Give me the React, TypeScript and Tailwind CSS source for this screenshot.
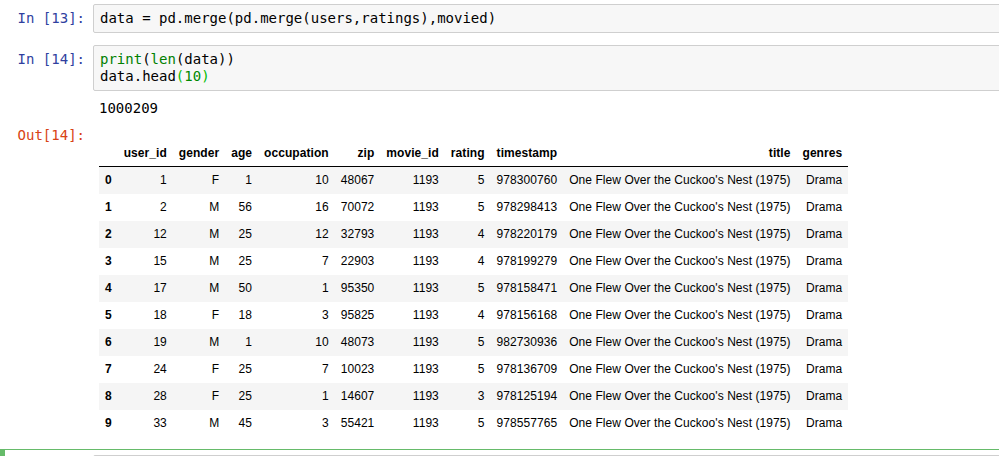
import React from 'react'

const mono = { fontFamily: '"DejaVu Sans Mono", "Liberation Mono", monospace' }

const headers = ['', 'user_id', 'gender', 'age', 'occupation', 'zip', 'movie_id', 'rating', 'timestamp', 'title', 'genres']

const rows: (string | number)[][] = [
  [0, 1, 'F', 1, 10, '48067', 1193, 5, 978300760],
  [1, 2, 'M', 56, 16, '70072', 1193, 5, 978298413],
  [2, 12, 'M', 25, 12, '32793', 1193, 4, 978220179],
  [3, 15, 'M', 25, 7, '22903', 1193, 4, 978199279],
  [4, 17, 'M', 50, 1, '95350', 1193, 5, 978158471],
  [5, 18, 'F', 18, 3, '95825', 1193, 4, 978156168],
  [6, 19, 'M', 1, 10, '48073', 1193, 5, 982730936],
  [7, 24, 'F', 25, 7, '10023', 1193, 5, 978136709],
  [8, 28, 'F', 25, 1, '14607', 1193, 3, 978125194],
  [9, 33, 'M', 45, 3, '55421', 1193, 5, 978557765],
]

function Prompt({ children, out }: { children: React.ReactNode; out?: boolean }) {
  return (
    <div
      style={mono}
      className={`w-[93px] shrink-0 pr-[8px] text-right text-[14px] leading-[17px] ${out ? 'text-[#D84315]' : 'text-[#303F9F]'}`}
    >
      {children}
    </div>
  )
}

function InputBox({ children }: { children: React.ReactNode }) {
  return (
    <div
      style={mono}
      className="flex-1 -mr-[4px] rounded-l-[2px] border border-[#cfcfcf] bg-[#f7f7f7] py-[5px] pl-[6px] text-[14px] leading-[17px] text-black whitespace-pre"
    >
      {children}
    </div>
  )
}

export default function App() {
  return (
    <div className="w-[999px] h-[456px] overflow-hidden bg-white flex flex-col" style={{ fontFamily: '"Liberation Sans", Arial, sans-serif' }}>
      {/* cell 13 */}
      <div className="flex pt-[4px]">
        <div className="pt-[6px] flex"><Prompt>In [13]:</Prompt></div>
        <InputBox>data = pd.merge(pd.merge(users,ratings),movied)</InputBox>
      </div>

      {/* cell 14 */}
      <div className="flex mt-[12px]">
        <div className="pt-[6px] flex"><Prompt>In [14]:</Prompt></div>
        <InputBox>
          <span className="text-[#008000]">print</span>(<span className="text-[#008000]">len</span>(data)){'\n'}
          data.head<span className="text-[#0b0]">(</span><span className="text-[#080]">10</span><span className="text-[#0b0]">)</span>
        </InputBox>
      </div>

      {/* stdout */}
      <div className="flex mt-[9px]">
        <div className="w-[99px] shrink-0" />
        <div style={mono} className="text-[14px] leading-[17px] text-black">1000209</div>
      </div>

      {/* Out[14] */}
      <div className="flex mt-[10px] pb-[12px]">
        <div className="w-[93px] shrink-0 flex">
          <Prompt out>Out[14]:</Prompt>
        </div>
        <div className="pl-[6px]">
          <table className="mt-[13px] border-collapse text-[12px] tracking-[0.06px] text-black">
            <thead>
              <tr className="border-b border-black">
                {headers.map((h, i) => (
                  <th key={i} className="px-[6px] py-[6px] leading-[14px] font-bold text-right whitespace-nowrap">{h}</th>
                ))}
              </tr>
            </thead>
            <tbody>
              {rows.map((r, i) => (
                <tr key={i} className={i % 2 === 0 ? 'bg-[#f5f5f5]' : 'bg-white'}>
                  <th className="px-[6px] py-[6px] leading-[15px] font-bold text-left">{r[0]}</th>
                  {r.slice(1).map((c, j) => (
                    <td key={j} className="px-[6px] py-[6px] leading-[15px] text-right whitespace-nowrap">{c}</td>
                  ))}
                  <td className="px-[6px] py-[6px] leading-[15px] text-right whitespace-nowrap">One Flew Over the Cuckoo's Nest (1975)</td>
                  <td className="px-[6px] py-[6px] leading-[15px] text-right whitespace-nowrap">Drama</td>
                </tr>
              ))}
            </tbody>
          </table>
        </div>
      </div>

      {/* selected empty cell */}
      <div className="flex border-t border-[#66BB6A]">
        <div className="w-[5px] shrink-0 bg-[#66BB6A]" />
        <div className="flex flex-1 pt-[5px]">
          <div className="w-[88px] shrink-0" />
          <div className="flex-1 -mr-[4px] h-[30px] rounded-l-[2px] border border-[#cfcfcf] bg-[#f7f7f7]" />
        </div>
      </div>
    </div>
  )
}
